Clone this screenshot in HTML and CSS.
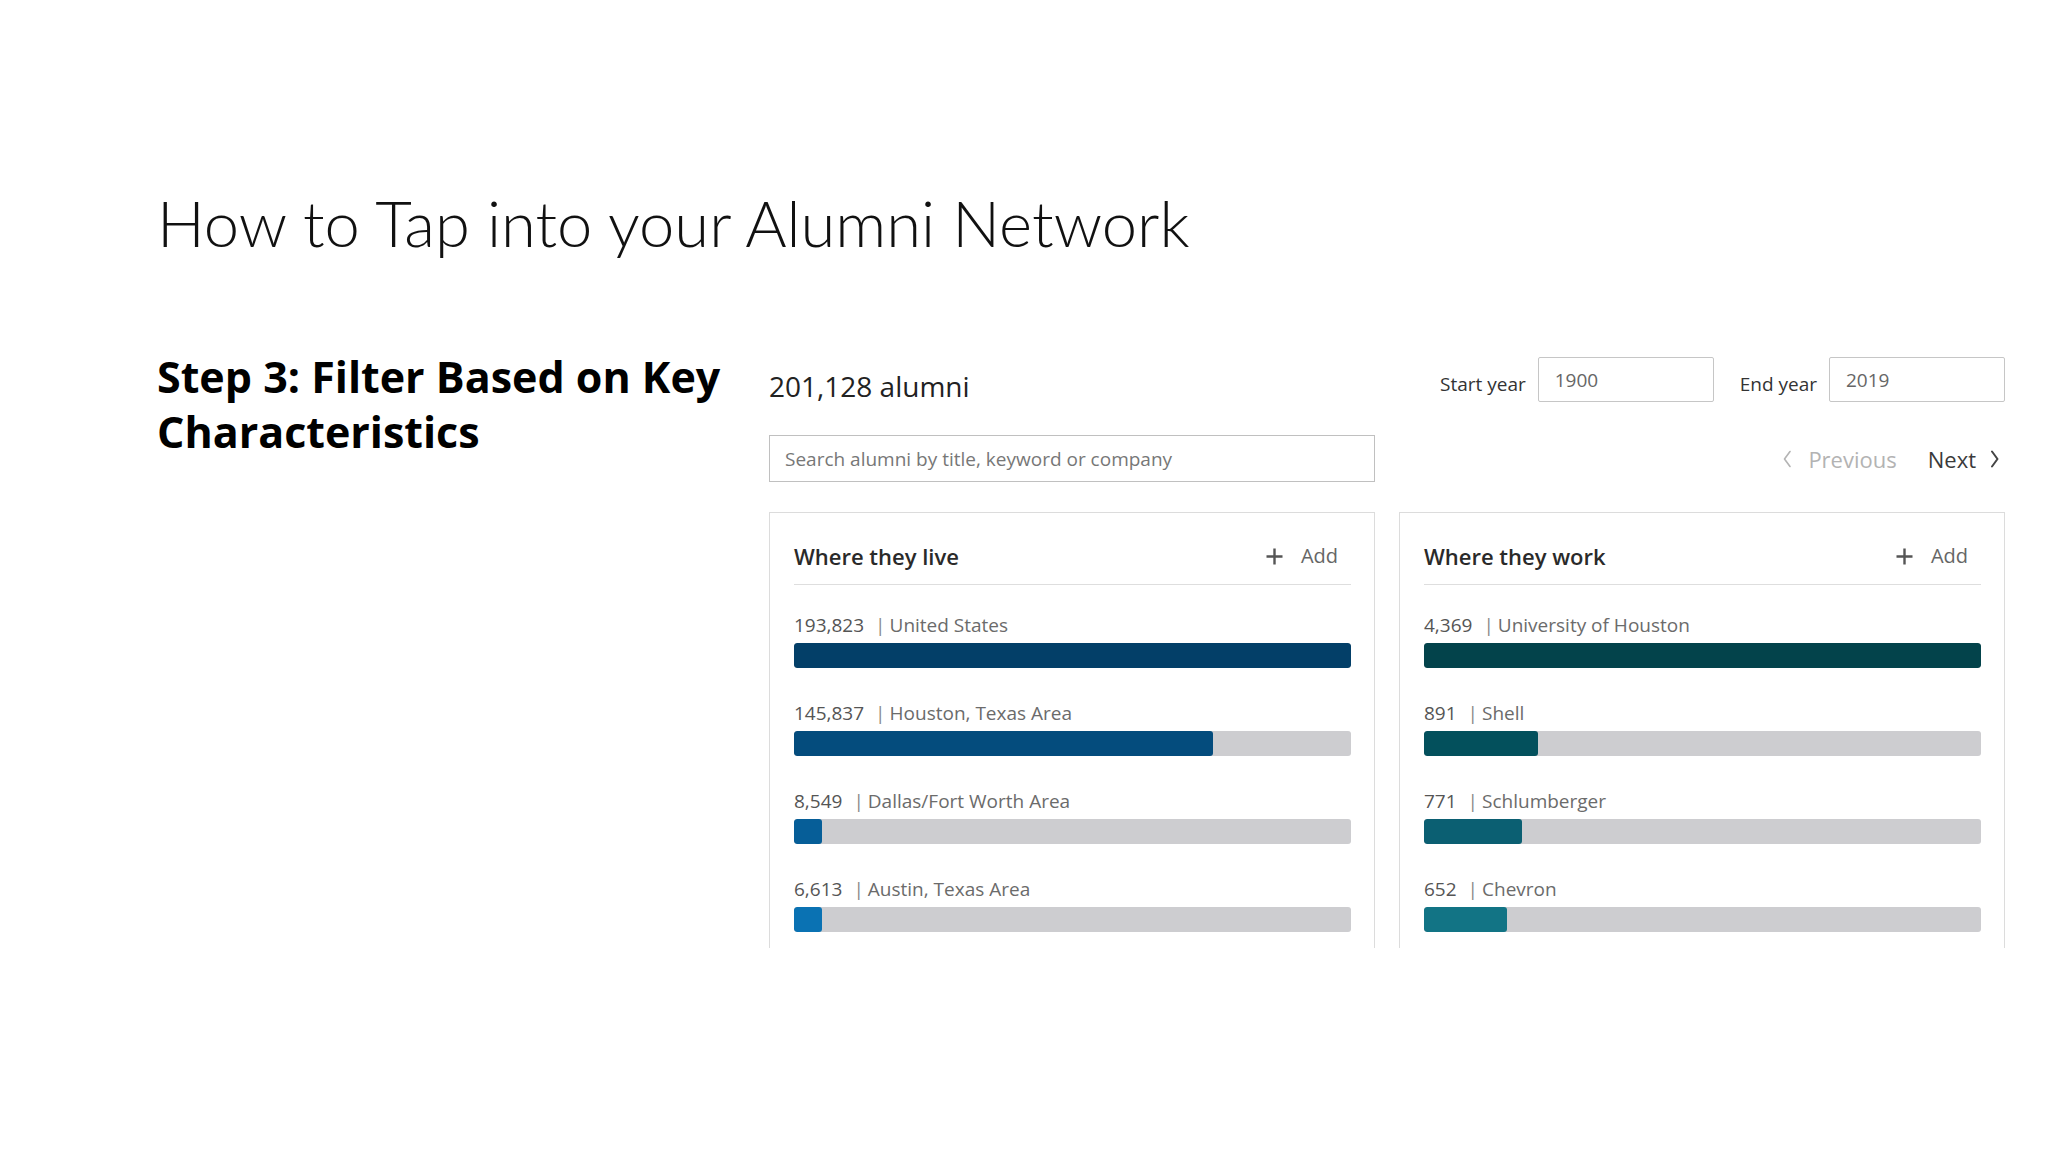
FILE: index.html
```html
<!DOCTYPE html>
<html lang="en">
<head>
<meta charset="utf-8">
<title>How to Tap into your Alumni Network</title>
<link rel="stylesheet" href="styles.css">
</head>
<body>
<div class="slide">
  <h1 class="title">How to Tap into your Alumni Network</h1>
  <div class="content">
    <h2 class="step">Step 3: Filter Based on Key Characteristics</h2>
    <div class="dash">
      <div class="topbar">
        <div class="count">201,128 alumni</div>
        <div class="years">
          <span class="ylabel">Start year</span>
          <div class="yinput">1900</div>
          <span class="ylabel gap">End year</span>
          <div class="yinput">2019</div>
        </div>
      </div>
      <div class="searchrow">
        <div class="search">Search alumni by title, keyword or company</div>
        <div class="pager">
          <svg class="chev" width="8" height="18" viewBox="0 0 8 18"><polyline points="7,1.5 1.5,9 7,16.5" fill="none" stroke="#b4b4b4" stroke-width="1.6" stroke-linecap="round" stroke-linejoin="round"/></svg>
          <span class="prev">Previous</span>
          <span class="next">Next</span>
          <svg class="chev chev-r" width="8" height="18" viewBox="0 0 8 18"><polyline points="1,1.5 6.5,9 1,16.5" fill="none" stroke="#444" stroke-width="2" stroke-linecap="round" stroke-linejoin="round"/></svg>
        </div>
      </div>
      <div class="cards">
        <div class="card">
          <div class="card-head">
            <span class="card-title">Where they live</span>
            <span class="add"><svg width="17" height="17" viewBox="0 0 17 17"><path d="M8.5 0.5v16M0.5 8.5h16" stroke="#555" stroke-width="2.4" fill="none"/></svg><span>Add</span></span>
          </div>
          <div class="rows">
            <div class="row">
              <div class="label"><span class="num">193,823</span><span class="sep">|</span>United States</div>
              <div class="track"><div class="fill c1" style="width:100%"></div></div>
            </div>
            <div class="row">
              <div class="label"><span class="num">145,837</span><span class="sep">|</span>Houston, Texas Area</div>
              <div class="track"><div class="fill c2" style="width:75.2%"></div></div>
            </div>
            <div class="row">
              <div class="label"><span class="num">8,549</span><span class="sep">|</span>Dallas/Fort Worth Area</div>
              <div class="track"><div class="fill c3" style="width:5%"></div></div>
            </div>
            <div class="row">
              <div class="label"><span class="num">6,613</span><span class="sep">|</span>Austin, Texas Area</div>
              <div class="track"><div class="fill c4" style="width:5%"></div></div>
            </div>
          </div>
        </div>
        <div class="card">
          <div class="card-head">
            <span class="card-title">Where they work</span>
            <span class="add"><svg width="17" height="17" viewBox="0 0 17 17"><path d="M8.5 0.5v16M0.5 8.5h16" stroke="#555" stroke-width="2.4" fill="none"/></svg><span>Add</span></span>
          </div>
          <div class="rows">
            <div class="row">
              <div class="label"><span class="num">4,369</span><span class="sep">|</span>University of Houston</div>
              <div class="track"><div class="fill t1" style="width:100%"></div></div>
            </div>
            <div class="row">
              <div class="label"><span class="num">891</span><span class="sep">|</span>Shell</div>
              <div class="track"><div class="fill t2" style="width:20.4%"></div></div>
            </div>
            <div class="row">
              <div class="label"><span class="num">771</span><span class="sep">|</span>Schlumberger</div>
              <div class="track"><div class="fill t3" style="width:17.6%"></div></div>
            </div>
            <div class="row">
              <div class="label"><span class="num">652</span><span class="sep">|</span>Chevron</div>
              <div class="track"><div class="fill t4" style="width:14.9%"></div></div>
            </div>
          </div>
        </div>
      </div>
    </div>
  </div>
</div>
</body>
</html>
```
FILE: styles.css
```css
html, body {
  margin: 0;
  padding: 0;
  background: #ffffff;
}
body {
  width: 2048px;
  height: 1152px;
  overflow: hidden;
}
.slide {
  box-sizing: border-box;
  width: 2048px;
  height: 1152px;
  padding: 187px 43px 0 157px;
}
.title {
  margin: 0;
  font-family: "Lato", "Open Sans", sans-serif;
  font-weight: 300;
  font-size: 63.3px;
  line-height: 72px;
  color: #111;
  white-space: nowrap;
}
.content {
  display: flex;
  margin-top: 90px;
}
.step {
  width: 612px;
  flex: none;
  margin: 0;
  font-family: "Open Sans", "Lato", sans-serif;
  font-weight: 700;
  font-size: 43px;
  line-height: 55px;
  letter-spacing: 0;
  color: #000;
}
.dash {
  flex: 1;
  padding-top: 8px;
  font-family: "Open Sans", "Noto Sans", sans-serif;
}
.topbar {
  display: flex;
  justify-content: space-between;
  height: 45px;
}
.count {
  align-self: flex-end;
  margin-bottom: -3px;
  font-size: 28px;
  line-height: 38px;
  color: #222;
}
.years {
  display: flex;
  align-items: flex-end;
}
.ylabel {
  font-size: 19px;
  line-height: 26px;
  color: #333;
  margin: 0 12px 5px 0;
}
.ylabel.gap {
  margin-left: 26px;
}
.yinput {
  box-sizing: border-box;
  width: 176px;
  height: 45px;
  border: 1px solid #c6c6c6;
  border-radius: 2px;
  padding: 0 0 0 16px;
  display: flex;
  align-items: center;
  font-size: 19px;
  color: #666;
  background: #fff;
}
.searchrow {
  display: flex;
  justify-content: space-between;
  align-items: center;
  margin-top: 33px;
  height: 47px;
}
.search {
  box-sizing: border-box;
  width: 606px;
  height: 47px;
  border: 1px solid #c0c0c0;
  padding-left: 15px;
  display: flex;
  align-items: center;
  font-size: 19px;
  color: #777;
  background: #fff;
}
.pager {
  display: flex;
  align-items: center;
  padding-right: 6px;
  font-size: 22px;
  line-height: 30px;
}
.chev {
  display: block;
}
.prev {
  margin-left: 17px;
  color: #b3b3b3;
}
.next {
  margin-left: 31px;
  color: #3a3a3a;
}
.chev-r {
  margin-left: 15px;
}
.cards {
  display: grid;
  grid-template-columns: 606px 606px;
  column-gap: 24px;
  margin-top: 30px;
}
.card {
  box-sizing: border-box;
  height: 436px;
  border: 1px solid #dcdcdc;
  border-bottom: none;
  padding: 0 23px 0 24px;
  background: #fff;
}
.card-head {
  display: flex;
  justify-content: space-between;
  align-items: center;
  padding: 27px 0 12px;
  border-bottom: 1px solid #dedede;
}
.card-title {
  font-size: 22px;
  font-weight: 600;
  line-height: 32px;
  color: #2a2a2a;
}
.add {
  display: flex;
  align-items: center;
  gap: 18px;
  margin-right: 13px;
  font-size: 20px;
  line-height: 28px;
  color: #666;
}
.add svg {
  display: block;
}
.rows {
  padding-top: 27px;
}
.row + .row {
  margin-top: 32px;
}
.label {
  font-size: 19px;
  line-height: 26px;
  color: #6b6b6b;
  white-space: nowrap;
}
.num {
  color: #555;
}
.sep {
  margin: 0 4px 0 11px;
  color: #888;
}
.track {
  margin-top: 5px;
  height: 25px;
  background: #cdcdd0;
  border-radius: 3px;
  overflow: hidden;
}
.fill {
  height: 100%;
  border-radius: 3px;
}
.c1 { background: #033f68; }
.c2 { background: #044c7d; }
.c3 { background: #065e98; }
.c4 { background: #0a72b3; }
.t1 { background: #03434b; }
.t2 { background: #03505c; }
.t3 { background: #0b5f72; }
.t4 { background: #127485; }
```
